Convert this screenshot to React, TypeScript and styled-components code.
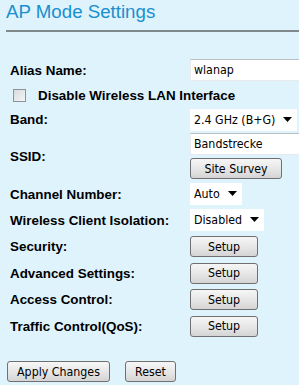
import styled, { createGlobalStyle } from "styled-components";

const GlobalStyle = createGlobalStyle`
  html, body {
    margin: 0;
    padding: 0;
    background: #dff3fd;
  }
  body {
    width: 299px;
    height: 385px;
    overflow: hidden;
    font-family: "Liberation Sans", Arial, sans-serif;
  }
`;

const Page = styled.div`
  padding: 0 0 0 6px;
`;

const Title = styled.h1`
  margin: 0;
  padding-top: 1px;
  height: 29px;
  font-size: 18.7px;
  font-weight: normal;
  color: #1a8fcd;
  line-height: 22px;
  border-bottom: 2px solid #80888c;
`;

const Table = styled.div`
  margin-top: 25px;
  padding-left: 4px;
  display: flex;
  flex-direction: column;
`;

const Row = styled.div<{ $h: number }>`
  display: flex;
  align-items: center;
  height: ${({ $h }) => $h}px;
`;

const Label = styled.div`
  width: 180px;
  flex-shrink: 0;
  font-size: 13.4px;
  font-weight: bold;
  color: #000;
`;

const Cell = styled.div`
  display: flex;
  flex-direction: column;
  align-items: flex-start;
  gap: 3px;
`;

const controlFont = `
  font-family: "DejaVu Sans Condensed", "DejaVu Sans", sans-serif;
  font-size: 12.3px;
  color: #000;
`;

const TextInput = styled.input`
  ${controlFont}
  box-sizing: border-box;
  width: 109px;
  height: 22px;
  padding: 0 3px;
  margin: 0;
  background: #fff;
  border: 1px solid #e6eaec;
  border-right: none;
  border-top-color: #b9c0c4;
  outline: none;
`;

const SelectWrap = styled.div<{ $w: number }>`
  position: relative;
  width: ${({ $w }) => $w}px;
  height: 22px;
`;

const Select = styled.select`
  ${controlFont}
  appearance: none;
  box-sizing: border-box;
  width: 100%;
  height: 100%;
  margin: 0;
  padding: 0 0 0 4px;
  background: #fff;
  border: none;
  outline: none;
`;

const Arrow = styled.svg`
  position: absolute;
  right: 5px;
  top: 8px;
  pointer-events: none;
`;

const Button = styled.button<{ $w: number }>`
  ${controlFont}
  box-sizing: border-box;
  width: ${({ $w }) => $w}px;
  height: 21px;
  margin: 0;
  padding: 0;
  border: 1px solid #707070;
  border-radius: 3px;
  background: linear-gradient(#f6f6f6, #e4e4e4 60%, #d4d4d4);
  cursor: pointer;
`;

const CheckRow = styled.label`
  display: flex;
  align-items: center;
  gap: 12px;
  padding-left: 3px;
  font-size: 13.4px;
  font-weight: bold;
  color: #000;
`;

const Box = styled.span`
  display: block;
  box-sizing: border-box;
  width: 13px;
  height: 13px;
  border: 1px solid #8d9498;
  background: linear-gradient(135deg, #d8dadc, #f4f5f6);
`;

const Footer = styled.div`
  display: flex;
  gap: 15px;
  margin-top: 22px;
  padding-left: 1px;
`;

const DropDown = ({ w, value }: { w: number; value: string }) => (
  <SelectWrap $w={w}>
    <Select defaultValue={value}>
      <option>{value}</option>
    </Select>
    <Arrow width="9" height="5" viewBox="0 0 9 5">
      <path d="M0 0h9L4.5 5z" fill="#000" />
    </Arrow>
  </SelectWrap>
);

export default function App() {
  return (
    <Page>
      <GlobalStyle />
      <Title>AP Mode Settings</Title>
      <Table>
        <Row $h={26}>
          <Label>Alias Name:</Label>
          <TextInput defaultValue="wlanap" />
        </Row>
        <Row $h={25}>
          <CheckRow>
            <Box />
            Disable Wireless LAN Interface
          </CheckRow>
        </Row>
        <Row $h={23}>
          <Label>Band:</Label>
          <DropDown w={107} value="2.4 GHz (B+G)" />
        </Row>
        <Row $h={50}>
          <Label>SSID:</Label>
          <Cell>
            <TextInput defaultValue="Bandstrecke" />
            <Button $w={92}>Site Survey</Button>
          </Cell>
        </Row>
        <Row $h={26}>
          <Label>Channel Number:</Label>
          <DropDown w={52} value="Auto" />
        </Row>
        <Row $h={26}>
          <Label>Wireless Client Isolation:</Label>
          <DropDown w={74} value="Disabled" />
        </Row>
        <Row $h={27}>
          <Label>Security:</Label>
          <Button $w={68}>Setup</Button>
        </Row>
        <Row $h={26}>
          <Label>Advanced Settings:</Label>
          <Button $w={68}>Setup</Button>
        </Row>
        <Row $h={27}>
          <Label>Access Control:</Label>
          <Button $w={68}>Setup</Button>
        </Row>
        <Row $h={26}>
          <Label>Traffic Control(QoS):</Label>
          <Button $w={68}>Setup</Button>
        </Row>
      </Table>
      <Footer>
        <Button $w={103}>Apply Changes</Button>
        <Button $w={51}>Reset</Button>
      </Footer>
    </Page>
  );
}
